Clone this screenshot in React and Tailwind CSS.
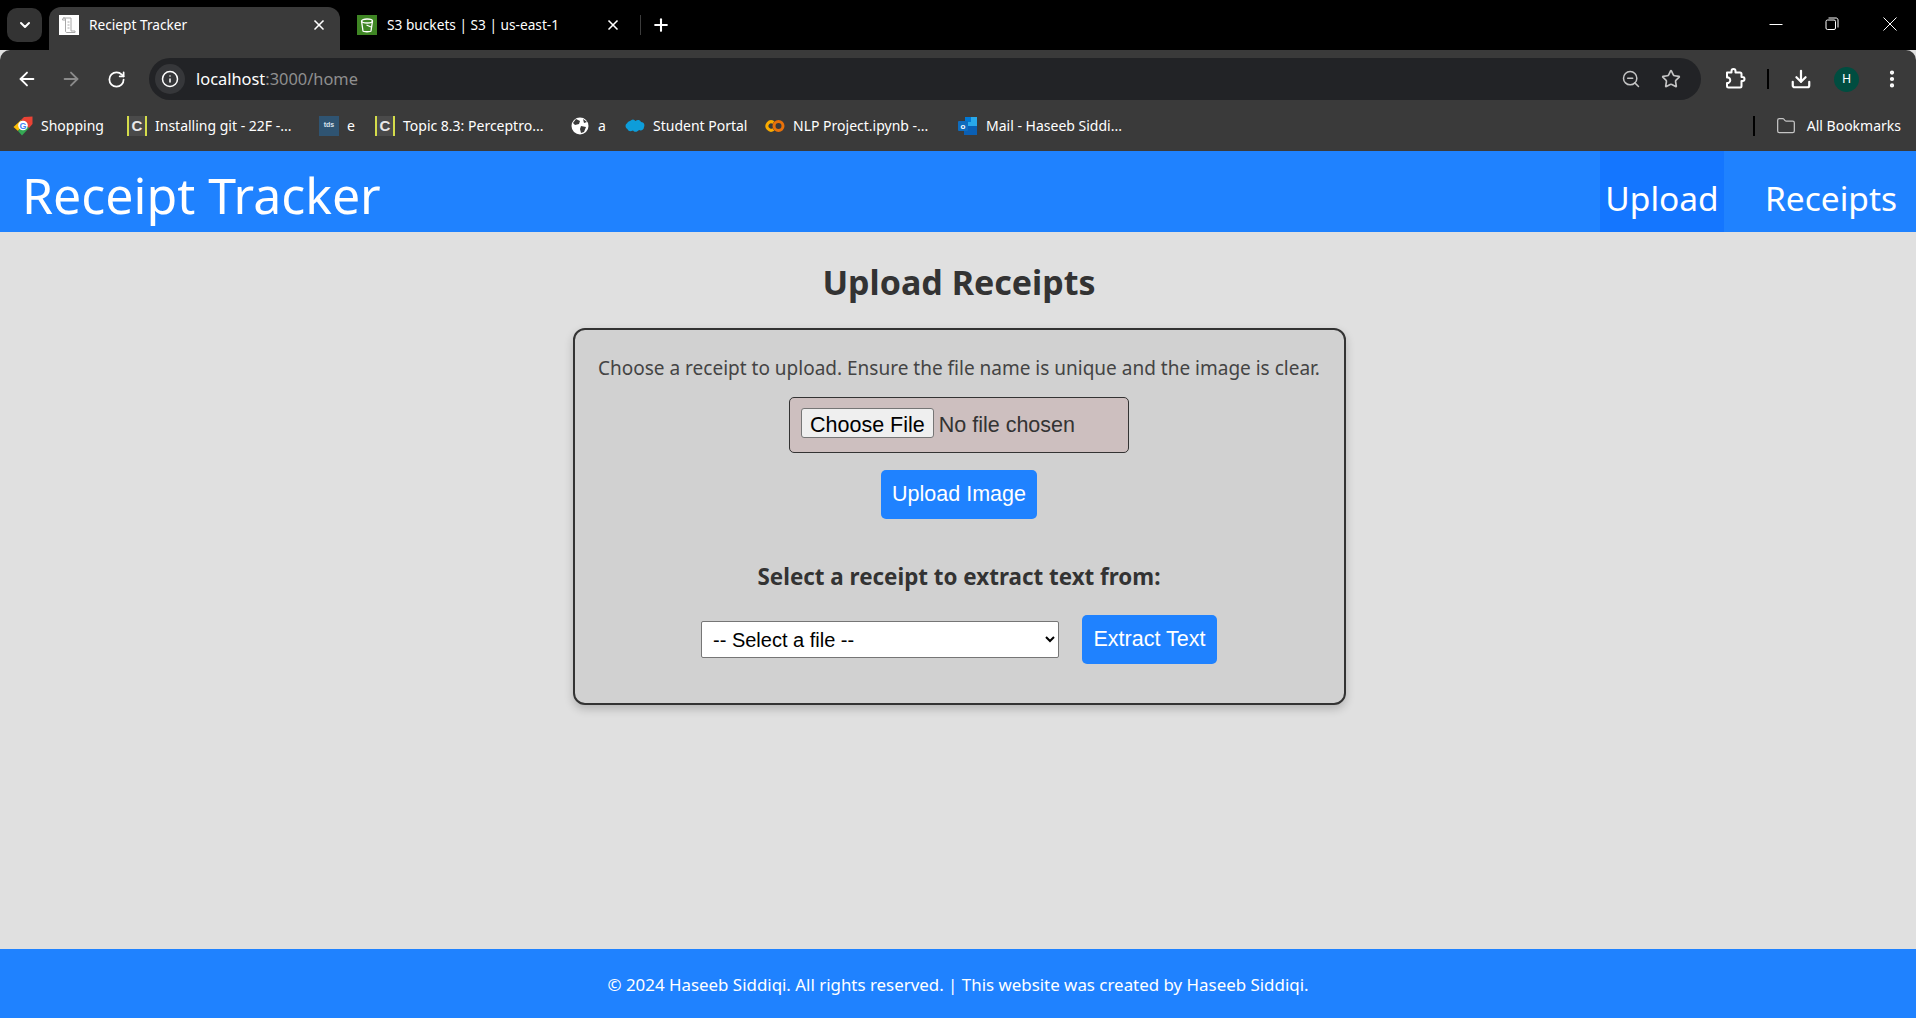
import React from "react";
import {
  ArrowLeft,
  ArrowRight,
  RotateCw,
  Info,
  ZoomOut,
  Star,
  Download,
  EllipsisVertical,
  ChevronDown,
  X,
  Plus,
  Folder,
} from "lucide-react";

const sans = "font-['Noto_Sans',sans-serif]";
const arial = "font-['Liberation_Sans',Arial,sans-serif]";

const GoogleTag = () => (
  <svg width="20" height="20" viewBox="0 0 20 20">
    <path d="M0.500 11 L8 4 L11 8 L5 15 Z" fill="#fbbc04" />
    <path d="M5 15 L11 8 L16 12 L9 19.500 Z" fill="#34a853" />
    <path d="M8 4 L11 1 L19.500 0.500 L19.500 8 L16 12 Z" fill="#ea4335" />
    <circle cx="10" cy="9.500" r="4.800" fill="#fff" />
    <text x="10" y="12.500" textAnchor="middle" fontSize="9" fontWeight="700" fill="#4285f4" fontFamily="Liberation Sans">G</text>
  </svg>
);

const CourseIcon = () => (
  <div className="w-5 h-5 shrink-0 bg-[#4a4a4a] border-x-2 border-[#d4dc4a] flex items-center justify-center text-[15px] font-bold text-[#e8e8e8] leading-none font-['Liberation_Sans',sans-serif]">
    C
  </div>
);

const TdsIcon = () => (
  <div className="w-5 h-5 shrink-0 bg-[#2f5472] flex items-center justify-center text-[7px] font-bold text-[#d8e2ea] font-['Liberation_Sans',sans-serif]">
    tds
  </div>
);

const GlobeIcon = () => (
  <svg width="20" height="20" viewBox="0 0 20 20">
    <circle cx="10" cy="10" r="8.500" fill="#fff" />
    <path d="M6 3 L10 5 L9 8 L5 9 L3 7 Z M11 10 L16 11 L14 16 L11 17 L10 13 Z M13 3 L17 6 L14 7 Z" fill="#3a3a3a" />
  </svg>
);

const CloudIcon = () => (
  <svg width="20" height="20" viewBox="0 0 20 20">
    <path d="M5 5 C7 3 9 3 10.500 5 C12 3.500 15 3.500 16 6 C19 6 20 9 19 11 C19 14 16 15 14 14 C12 16.500 9 16 8 14.500 C5 16 3 15 2.500 13 C0 12 0 8 2 7.500 C2.500 6 4 5 5 5 Z" fill="#0d9dda" />
  </svg>
);

const ColabIcon = () => (
  <svg width="20" height="20" viewBox="0 0 20 20" fill="none" strokeWidth="3">
    <path d="M8.500 6.500 A4.200 4.200 0 1 0 8.500 13.500" stroke="#f9ab00" />
    <circle cx="13.500" cy="10" r="4.500" stroke="#e8710a" />
  </svg>
);

const OutlookIcon = () => (
  <svg width="20" height="20" viewBox="0 0 20 20">
    <rect x="7" y="1" width="12" height="9" fill="#28a8ea" />
    <rect x="7" y="1" width="6" height="5" fill="#0078d4" />
    <path d="M6 10 L19 10 L19 19 L6 19 Z" fill="#0a5fb4" />
    <rect x="0" y="5" width="10" height="10" rx="1" fill="#0f6cbd" />
    <text x="5" y="13" textAnchor="middle" fontSize="8" fontWeight="700" fill="#fff" fontFamily="Liberation Sans">o</text>
  </svg>
);

const ReceiptIcon = () => (
  <div className="w-5 h-5 shrink-0 bg-white flex items-center justify-center">
    <svg width="16" height="18" viewBox="0 0 16 18" fill="none" stroke="#a8a8a8" strokeWidth="1">
      <path d="M2 2 H10 V15 H14 V16.500 H6 C5 16.500 4.500 16 4.500 15 V3 C4.500 2.500 4 2 3 2 C2 2 1.500 2.500 1.500 4 H4" />
      <path d="M6.500 6 H8.500 M6.500 9 H8.500 M6.500 12 H8.500" />
    </svg>
  </div>
);

const BucketIcon = () => (
  <div className="w-5 h-5 shrink-0 bg-[#3f8624] flex items-center justify-center">
    <svg width="14" height="15" viewBox="0 0 14 15" fill="none" stroke="#fff" strokeWidth="1.300">
      <ellipse cx="7" cy="3" rx="5.500" ry="2" />
      <path d="M1.500 3 L3 13 C3.500 14 10.500 14 11 13 L12.500 3" />
      <path d="M6.500 7 L11 9" />
    </svg>
  </div>
);

const bookmarks = [
  { icon: <GoogleTag />, label: "Shopping", w: "w-[114px]" },
  { icon: <CourseIcon />, label: "Installing git - 22F -...", w: "w-[192px]" },
  { icon: <TdsIcon />, label: "e", w: "w-[56px]" },
  { icon: <CourseIcon />, label: "Topic 8.3: Perceptro...", w: "w-[195px]" },
  { icon: <GlobeIcon />, label: "a", w: "w-[55px]" },
  { icon: <CloudIcon />, label: "Student Portal", w: "w-[140px]" },
  { icon: <ColabIcon />, label: "NLP Project.ipynb -...", w: "w-[193px]" },
  { icon: <OutlookIcon />, label: "Mail - Haseeb Siddi...", w: "w-[170px]" },
];

const Tab = ({ active, icon, title }) => (
  <div
    className={`relative h-[43px] pb-[7px] flex items-center ${
      active ? "w-[291px] bg-[#3a3a3a] rounded-t-[12px] pl-[10px] pr-[13px]" : "w-[297px] pl-[17px] pr-[16px]"
    }`}
  >
    {icon}
    <span className={`ml-[10px] flex-1 text-[13.700px] text-white truncate ${sans}`}>{title}</span>
    <X size={16} strokeWidth={2.5} className="text-white" />
  </div>
);

export default function App() {
  return (
    <div className="w-[1916px] h-[1018px] flex flex-col overflow-hidden bg-[#e0e0e0]">
      {/* Browser tab strip */}
      <div className="h-[50px] bg-black flex items-end shrink-0">
        <div className="w-[35px] h-[34px] ml-[7px] mb-[8px] mr-[7px] rounded-[10px] bg-[#333333] flex items-center justify-center">
          <ChevronDown size={16} strokeWidth={3} className="text-white" />
        </div>
        <Tab active title="Reciept Tracker" icon={<ReceiptIcon />} />
        <Tab title="S3 buckets | S3 | us-east-1" icon={<BucketIcon />} />
        <div className="w-[1px] h-[20px] bg-[#3c3c3c] mb-[15px] ml-[3px]" />
        <Plus size={20} strokeWidth={2.5} className="text-white mb-[15px] ml-[10px]" />
        <div className="flex-1" />
        <div className="flex items-center h-[50px] pb-[2px] text-white">
          {/* window controls */}
          <svg width="14" height="14" viewBox="0 0 14 14" stroke="currentColor" fill="none">
            <path d="M0.500 7.500 H13.500" />
          </svg>
          <svg width="14" height="14" viewBox="0 0 14 14" stroke="currentColor" fill="none" className="ml-[42px]">
            <rect x="1" y="3" width="9.500" height="9.500" rx="1.500" />
            <path d="M3.500 1 H11 C12.200 1 13 1.800 13 3 V10.500" />
          </svg>
          <svg width="14" height="14" viewBox="0 0 14 14" stroke="currentColor" fill="none" className="ml-[44px] mr-[19px]">
            <path d="M0.500 0.500 L13.500 13.500 M13.500 0.500 L0.500 13.500" />
          </svg>
        </div>
      </div>

      {/* Toolbar */}
      <div className="h-[50px] bg-[#3a3a3a] rounded-t-[10px] flex items-end shrink-0">
        <div className="h-[42px] flex items-center pl-[16px] w-[149px]">
          <ArrowLeft size={22} strokeWidth={2} className="text-white" />
          <ArrowRight size={22} strokeWidth={2} className="text-[#8a8a8a] ml-[22px]" />
          <RotateCw size={19} strokeWidth={2.2} className="text-white ml-[25px]" />
        </div>
        <div className="w-[1552px] h-[42px] rounded-full bg-[#222326] flex items-center pl-[6px] pr-[20px]">
          <div className="w-[30px] h-[30px] rounded-full bg-[#36373a] flex items-center justify-center">
            <Info size={18} strokeWidth={2} className="text-white" />
          </div>
          <span className={`ml-[11px] text-[16.400px] text-white ${sans}`}>
            localhost<span className="text-[#8f8f8f]">:3000/home</span>
          </span>
          <div className="flex-1" />
          <ZoomOut size={20} strokeWidth={1.8} className="text-[#c4c4c4]" />
          <Star size={20} strokeWidth={2} className="text-[#c4c4c4] ml-[20px]" />
        </div>
        <div className="flex-1 h-[42px] flex items-center">
          <svg width="24" height="24" viewBox="0 0 24 24" fill="none" stroke="white" strokeWidth="2" strokeLinejoin="round" className="ml-[22px]">
            <path d="M4 5.500 h4.500 V4 a2 2 0 0 1 4 0 v1.500 H17 a1.500 1.500 0 0 1 1.500 1.500 V10 h1 a2 2 0 0 1 0 4 h-1 v5 a1.500 1.500 0 0 1 -1.500 1.500 H5.500 A1.500 1.500 0 0 1 4 19 v-3 h1.500 a3 3 0 0 0 0 -5.500 H4 z" />
          </svg>
          <div className="w-[2px] h-[20px] bg-black ml-[20px]" />
          <Download size={22} strokeWidth={2.4} className="text-white ml-[21px]" />
          <div className="w-[25px] h-[25px] rounded-full bg-[#004d40] text-white text-[12px] flex items-center justify-center ml-[22px] font-['Liberation_Sans',sans-serif]">
            H
          </div>
          <EllipsisVertical size={22} strokeWidth={2.6} className="text-white ml-[22px]" />
        </div>
      </div>

      {/* Bookmarks bar */}
      <div className={`h-[51px] bg-[#3a3a3a] flex items-center pl-[13px] pr-[15px] text-[14px] text-white shrink-0 ${sans}`}>
        {bookmarks.map((b) => (
          <div key={b.label} className={`flex items-center gap-[8px] shrink-0 ${b.w}`}>
            {b.icon}
            <span className="whitespace-nowrap">{b.label}</span>
          </div>
        ))}
        <div className="flex-1" />
        <div className="w-[2px] h-[20px] bg-black mr-[21px]" />
        <Folder size={20} strokeWidth={1.5} className="text-[#c4c4c4] mr-[11px]" />
        <span className="whitespace-nowrap">All Bookmarks</span>
      </div>

      {/* App header */}
      <header className={`h-[81px] bg-[#1f82ff] flex items-stretch justify-between text-white shrink-0 ${sans}`}>
        <h1 className="pl-[22px] text-[50px] leading-[88px] whitespace-nowrap">Receipt Tracker</h1>
        <nav className="flex text-[33.500px] leading-[94px]">
          <a className="w-[124px] text-center bg-[#1476ff]">Upload</a>
          <a className="w-[192px] pl-[41px]">Receipts</a>
        </nav>
      </header>

      {/* Main */}
      <main className={`flex-1 flex flex-col items-center pl-[2px] ${sans}`}>
        <h2 className="mt-[25px] text-[34px] leading-[50px] font-bold text-[#333333]">Upload Receipts</h2>
        <div className="mt-[21px] w-[773px] h-[377px] rounded-[12px] border-2 border-[#333333] bg-[#d1d1d1] shadow-[0_4px_10px_rgba(0,0,0,0.2)] flex flex-col items-center">
          <p className="mt-[24px] text-[19px] leading-[28px] text-[#444444] whitespace-nowrap">
            Choose a receipt to upload. Ensure the file name is unique and the image is clear.
          </p>
          <div className="mt-[15px] w-[340px] h-[56px] rounded-[5px] border border-[#333333] bg-[#cdbfbf] flex items-center pl-[11px]">
            <input type="file" className={`text-[21.500px] text-[#333333] w-[320px] ${arial} file:mr-[5px] file:px-[8px] file:h-[30px] file:bg-[#efefef] file:border file:border-[#767676] file:rounded-[3px] file:text-black`} />
          </div>
          <button className={`mt-[17px] w-[156px] h-[49px] rounded-[5px] bg-[#1f82ff] text-white text-[21.500px] ${arial}`}>
            Upload Image
          </button>
          <h3 className="mt-[43px] text-[22.400px] leading-[30px] font-bold text-[#333333]">
            Select a receipt to extract text from:
          </h3>
          <div className="mt-[23px] flex items-center">
            <select className={`w-[358px] h-[37px] bg-white border border-[#767676] rounded-[2px] px-[7px] text-[20px] text-black ${arial}`}>
              <option>-- Select a file --</option>
            </select>
            <button className={`ml-[23px] w-[135px] h-[49px] rounded-[5px] bg-[#1f82ff] text-white text-[21.500px] ${arial}`}>
              Extract Text
            </button>
          </div>
        </div>
      </main>

      {/* Footer */}
      <footer className={`h-[69px] pt-[2px] bg-[#1f82ff] flex items-center justify-center text-white text-[16.900px] shrink-0 ${sans}`}>
        © 2024 Haseeb Siddiqi. All rights reserved. | This website was created by Haseeb Siddiqi.
      </footer>
    </div>
  );
}
